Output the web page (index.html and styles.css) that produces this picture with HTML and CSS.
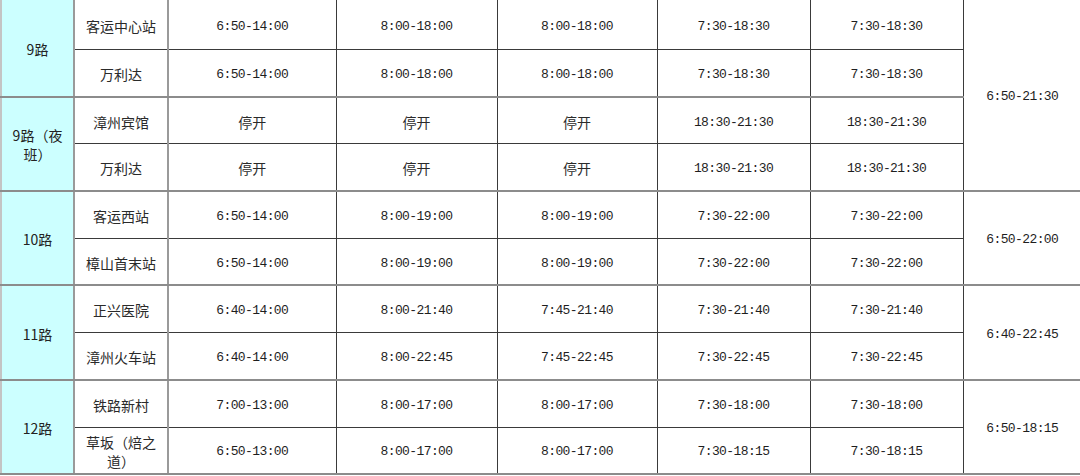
FILE: index.html
```html
<!DOCTYPE html>
<html lang="zh">
<head>
<meta charset="utf-8">
<link rel="stylesheet" href="styles.css">
</head>
<body>
<table class="sched">
  <colgroup>
    <col class="c-route"><col class="c-stop"><col class="c-t1"><col class="c-t2"><col class="c-t3"><col class="c-t4"><col class="c-t5"><col class="c-all">
  </colgroup>
  <tbody>
    <tr class="first">
      <td class="route" rowspan="2">9路</td>
      <td class="stop">客运中心站</td>
      <td class="tm">6:50-14:00</td><td class="tm">8:00-18:00</td><td class="tm">8:00-18:00</td><td class="tm">7:30-18:30</td><td class="tm">7:30-18:30</td>
      <td class="tm all" rowspan="4">6:50-21:30</td>
    </tr>
    <tr class="grp-end">
      <td class="stop">万利达</td>
      <td class="tm">6:50-14:00</td><td class="tm">8:00-18:00</td><td class="tm">8:00-18:00</td><td class="tm">7:30-18:30</td><td class="tm">7:30-18:30</td>
    </tr>
    <tr>
      <td class="route" rowspan="2">9路（夜班）</td>
      <td class="stop">漳州宾馆</td>
      <td class="off">停开</td><td class="off">停开</td><td class="off">停开</td><td class="tm">18:30-21:30</td><td class="tm">18:30-21:30</td>
    </tr>
    <tr class="grp-end">
      <td class="stop">万利达</td>
      <td class="off">停开</td><td class="off">停开</td><td class="off">停开</td><td class="tm">18:30-21:30</td><td class="tm">18:30-21:30</td>
    </tr>
    <tr>
      <td class="route" rowspan="2">10路</td>
      <td class="stop">客运西站</td>
      <td class="tm">6:50-14:00</td><td class="tm">8:00-19:00</td><td class="tm">8:00-19:00</td><td class="tm">7:30-22:00</td><td class="tm">7:30-22:00</td>
      <td class="tm all" rowspan="2">6:50-22:00</td>
    </tr>
    <tr class="grp-end">
      <td class="stop">樟山首末站</td>
      <td class="tm">6:50-14:00</td><td class="tm">8:00-19:00</td><td class="tm">8:00-19:00</td><td class="tm">7:30-22:00</td><td class="tm">7:30-22:00</td>
    </tr>
    <tr>
      <td class="route" rowspan="2">11路</td>
      <td class="stop">正兴医院</td>
      <td class="tm">6:40-14:00</td><td class="tm">8:00-21:40</td><td class="tm">7:45-21:40</td><td class="tm">7:30-21:40</td><td class="tm">7:30-21:40</td>
      <td class="tm all" rowspan="2">6:40-22:45</td>
    </tr>
    <tr class="grp-end">
      <td class="stop">漳州火车站</td>
      <td class="tm">6:40-14:00</td><td class="tm">8:00-22:45</td><td class="tm">7:45-22:45</td><td class="tm">7:30-22:45</td><td class="tm">7:30-22:45</td>
    </tr>
    <tr>
      <td class="route" rowspan="2">12路</td>
      <td class="stop">铁路新村</td>
      <td class="tm">7:00-13:00</td><td class="tm">8:00-17:00</td><td class="tm">8:00-17:00</td><td class="tm">7:30-18:00</td><td class="tm">7:30-18:00</td>
      <td class="tm all" rowspan="2">6:50-18:15</td>
    </tr>
    <tr class="grp-end">
      <td class="stop">草坂（焙之道）</td>
      <td class="tm">6:50-13:00</td><td class="tm">8:00-17:00</td><td class="tm">8:00-17:00</td><td class="tm">7:30-18:15</td><td class="tm">7:30-18:15</td>
    </tr>
  </tbody>
</table>
</body>
</html>
```

FILE: styles.css
```css
html, body {
  margin: 0;
  padding: 0;
  background: #ffffff;
}

.sched {
  width: 1080px;
  table-layout: fixed;
  border-collapse: collapse;
  margin-top: -1px;
  color: #222222;
  font-family: "Noto Sans CJK SC", sans-serif;
  font-size: 14px;
}

.c-route { width: 73px; }
.c-stop { width: 94px; }
.c-t1 { width: 168px; }
.c-t2 { width: 161px; }
.c-t3 { width: 160px; }
.c-t4 { width: 153px; }
.c-t5 { width: 153px; }
.c-all { width: 118px; }

.sched tr {
  height: 47.2px;
}

.sched tr.first {
  height: 50px;
}

.sched td {
  border: 1px solid #3a3a3a;
  text-align: center;
  vertical-align: middle;
  padding: 3px 6px 0;
  line-height: 19px;
}

.sched td:last-child {
  border-right: none;
}

.sched .route {
  background: #ccffff;
  border-left: 2px solid #c4c4c4;
  border-right: 2px solid #9a9a9a;
  border-bottom: 2px solid #8c8c8c;
  padding: 3px 8px 0;
}

.sched .stop {
  color: #2a2a2a;
  padding: 3px 10px 0;
  border-right: 2px solid #9a9a9a;
}

.sched .off {
  color: #2a2a2a;
}

.sched .tm {
  font-family: "Liberation Mono", "Noto Sans CJK SC", monospace;
  font-size: 13px;
  letter-spacing: -0.6px;
  color: #1e1e1e;
}

.sched .grp-end td {
  border-bottom: 2px solid #8c8c8c;
}

.sched .all {
  border-bottom: 2px solid #8c8c8c;
}
```
